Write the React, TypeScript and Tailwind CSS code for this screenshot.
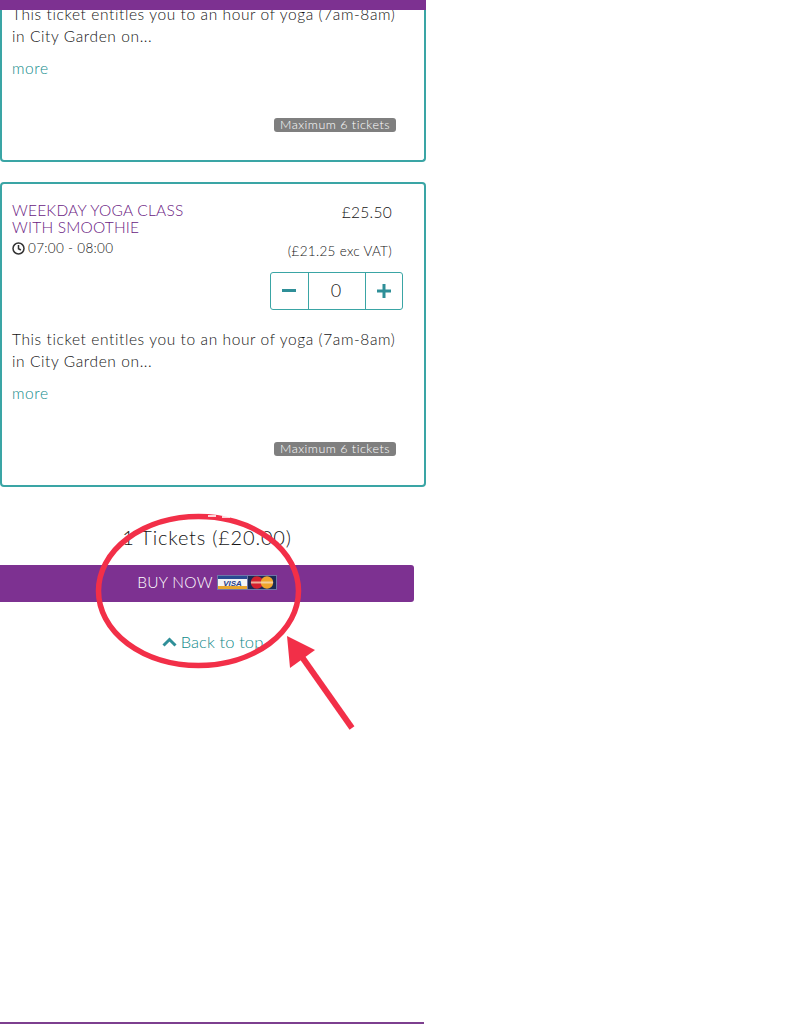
import React from "react";

function Badge() {
  return (
    <div className="flex justify-end pr-[28px]">
      <span className="h-[14px] w-[122px] rounded-[3px] bg-[#7f7f7f] text-center text-[12.5px] font-light leading-[13px] tracking-[0.5px] text-[#ffffff]">
        Maximum 6 tickets
      </span>
    </div>
  );
}

function Description({ clipped }: { clipped?: boolean }) {
  return (
    <div className={clipped ? "" : "mt-[18px]"}>
      <p className="pl-[10px] text-[15.5px] font-light leading-[22px] tracking-[0.6px] text-[#141414]">
        This ticket entitles you to an hour of yoga (7am-8am)
        <br />
        in City Garden on...
      </p>
      <p className="mt-[10px] pl-[10px] text-[15.5px] font-light leading-[22px] tracking-[0.6px] text-[#0f8a8a]">more</p>
    </div>
  );
}

function Cards() {
  return (
    <svg width="60" height="15" viewBox="0 0 60 15" className="ml-[4px] mt-[2px] shrink-0">
      <rect x="0" y="0" width="60" height="15" fill="#6f76a8" />
      <rect x="1" y="1" width="29" height="13" fill="#f4f4f4" />
      <rect x="1" y="1" width="29" height="3" fill="#2b4a92" />
      <rect x="1" y="11" width="29" height="3" fill="#e8a62e" />
      <text x="15.5" y="10.5" textAnchor="middle" fontSize="8" fontWeight="900" fontStyle="italic" fontFamily="Liberation Sans, sans-serif" fill="#24408a">
        VISA
      </text>
      <rect x="31" y="1" width="28" height="13" fill="#1b2a55" />
      <circle cx="40" cy="7.5" r="6.2" fill="#d4202e" />
      <circle cx="50" cy="7.5" r="6.2" fill="#f0a52c" />
      <rect x="34" y="6.5" width="22" height="2" fill="#f6dcc0" opacity="0.75" />
    </svg>
  );
}

export default function App() {
  return (
    <div className="relative flex h-[1024px] w-[796px] flex-col overflow-hidden bg-white font-['Lato','Open_Sans',sans-serif]">
      <div className="relative z-10 h-[10px] w-[426px] bg-[#7d3191]" />

      <div className="-mt-[7px] flex h-[159px] w-[426px] flex-col rounded-b-[4px] border-x-2 border-b-2 border-[#3aa5a5]">
        <Description clipped />
        <div className="mt-[39px]">
          <Badge />
        </div>
      </div>

      <div className="mt-[20px] flex h-[305px] w-[426px] flex-col rounded-[4px] border-2 border-[#3aa5a5]">
        <div className="flex justify-between pl-[10px] pr-[32px] pt-[18px]">
          <div>
            <div className="text-[15.5px] font-light uppercase leading-[17px] tracking-[0.2px] text-[#6a1a82]">
              Weekday Yoga Class
              <br />
              With Smoothie
            </div>
            <div className="mt-[3px] flex items-center gap-[3px] text-[13.5px] font-light leading-[18px] tracking-[0.3px] text-[#141414]">
              <svg width="13" height="13" viewBox="0 0 13 13" fill="none" stroke="#333333" strokeWidth="1.5">
                <circle cx="6.5" cy="6.5" r="5.5" />
                <path d="M6.5 3v3.7l2.4 1.3" />
              </svg>
              07:00 - 08:00
            </div>
          </div>
          <div className="text-right">
            <div className="text-[15.5px] font-light leading-[20px] tracking-[0.3px] text-[#141414]">£25.50</div>
            <div className="mt-[20px] text-[13.5px] font-light leading-[18px] tracking-[0.3px] text-[#141414]">(£21.25 exc VAT)</div>
          </div>
        </div>

        <div className="mt-[12px] flex justify-end pr-[21px]">
          <div className="flex h-[38px] w-[133px] items-center rounded-[3px] border border-[#3aa5a5]">
            <div className="flex h-full w-[37px] items-center justify-center">
              <span className="mb-[1px] mr-[2px] h-[3px] w-[14px] bg-[#2f8f98]" />
            </div>
            <div className="flex h-full w-[58px] items-center justify-center border-x border-[#3aa5a5] pb-[1px] pr-[2px] text-[18px] font-light text-[#141414]">
              0
            </div>
            <div className="flex h-full flex-1 items-center justify-center">
              <svg width="14" height="14" viewBox="0 0 14 14" fill="#2f8f98">
                <rect x="0" y="5.5" width="14" height="3" />
                <rect x="5.5" y="0" width="3" height="14" />
              </svg>
            </div>
          </div>
        </div>

        <Description />
        <div className="mt-[38px]">
          <Badge />
        </div>
      </div>

      <div className="mt-[36px] w-[414px] text-center text-[20px] font-light leading-[28px] tracking-[0.8px] text-[#141414]">1 Tickets (£20.00)</div>

      <div className="mt-[14px] flex h-[37px] w-[414px] items-center justify-center rounded-r-[3px] bg-[#7d3191] pb-[4px]">
        <span className="text-[15.5px] font-light leading-[20px] tracking-[0.3px] text-[#ffffff]">BUY NOW</span>
        <Cards />
      </div>

      <div className="mt-[29px] flex w-[426px] items-center justify-center gap-[4px] pr-[1px] text-[16.5px] font-light leading-[22px] tracking-[0.1px] text-[#0f8a8a]">
        <svg width="15" height="10" viewBox="0 0 15 10" fill="none" stroke="#2f8f98" strokeWidth="3">
          <path d="M1.5 8.5 7.5 2.5l6 6" />
        </svg>
        Back to top
      </div>

      <div className="flex-1" />
      <div className="h-[2px] w-[424px] bg-[#7d3f8f]" />

      <svg width="796" height="1024" viewBox="0 0 796 1024" className="pointer-events-none absolute left-0 top-0" fill="none">
        <ellipse cx="198.5" cy="591" rx="100" ry="74.5" stroke="#f22f48" strokeWidth="5.5" />
        <path d="M208 516h8M222 517h8" stroke="#ffffff" strokeWidth="2" opacity="0.8" />
        <path d="M352 728 302 657" stroke="#f22f48" strokeWidth="6" />
        <path d="M287 636 290 668 315 650Z" fill="#f22f48" />
      </svg>
    </div>
  );
}
